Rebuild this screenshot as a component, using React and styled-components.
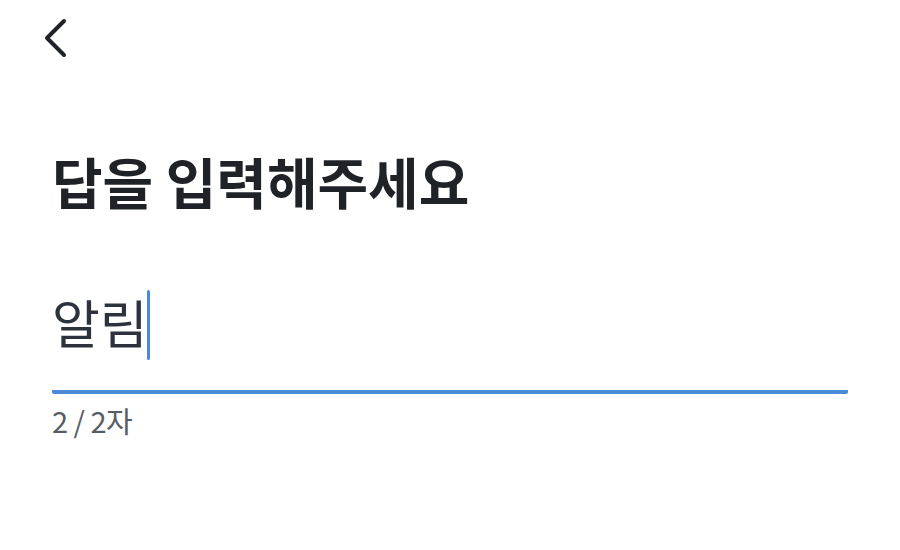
import React from "react";
import styled, { createGlobalStyle } from "styled-components";

const Global = createGlobalStyle`
  html, body { margin: 0; padding: 0; background: #ffffff; }
  body { font-family: "Noto Sans CJK KR", "Noto Sans", sans-serif; }
`;

const Page = styled.div`
  width: 900px;
  height: 550px;
  background: #fff;
  display: flex;
  flex-direction: column;
  overflow: hidden;
`;

const Header = styled.header`
  height: 78px;
  display: flex;
  align-items: flex-start;
  padding: 17px 0 0 40px;
  box-sizing: border-box;
`;

const BackButton = styled.button`
  border: 0;
  background: none;
  padding: 0;
  width: 30px;
  height: 42px;
  display: flex;
  align-items: center;
  justify-content: center;
  cursor: pointer;
`;

const Content = styled.main`
  display: flex;
  flex-direction: column;
  padding: 0 52px 0 52px;
`;

const Title = styled.h1`
  margin: 66px 0 0 0;
  font-family: "Noto Sans CJK KR", sans-serif;
  font-weight: 700;
  font-size: 55px;
  line-height: 72px;
  color: #1f2328;
  letter-spacing: 0;
`;

const Field = styled.div`
  margin-top: 44px;
  display: flex;
  align-items: center;
  height: 130px;
  border-bottom: 4px solid #4a8bd9;
  border-radius: 2px;
`;

const Value = styled.span`
  font-family: "Noto Sans CJK KR", sans-serif;
  font-size: 52px;
  font-weight: 400;
  color: #2c333d;
  line-height: 1;
  margin-bottom: 6px;
`;

const Caret = styled.span`
  display: inline-block;
  width: 3px;
  height: 70px;
  border-radius: 2px;
  background: #4a8bd9;
  margin-left: -1px;
`;

const Counter = styled.div`
  margin-top: 5px;
  font-family: "Noto Sans CJK KR", sans-serif;
  font-size: 29px;
  color: #575d66;
  letter-spacing: -0.5px;
`;

export default function App() {
  return (
    <>
      <Global />
      <Page>
        <Header>
          <BackButton aria-label="뒤로">
            <svg width="26" height="42" viewBox="0 0 26 42">
              <polyline
                points="22,4 5,21 22,38"
                fill="none"
                stroke="#1f2328"
                strokeWidth="4"
                strokeLinecap="round"
                strokeLinejoin="round"
              />
            </svg>
          </BackButton>
        </Header>
        <Content>
          <Title>답을 입력해주세요</Title>
          <Field>
            <Value>알림</Value>
            <Caret />
          </Field>
          <Counter>2 / 2자</Counter>
        </Content>
      </Page>
    </>
  );
}
